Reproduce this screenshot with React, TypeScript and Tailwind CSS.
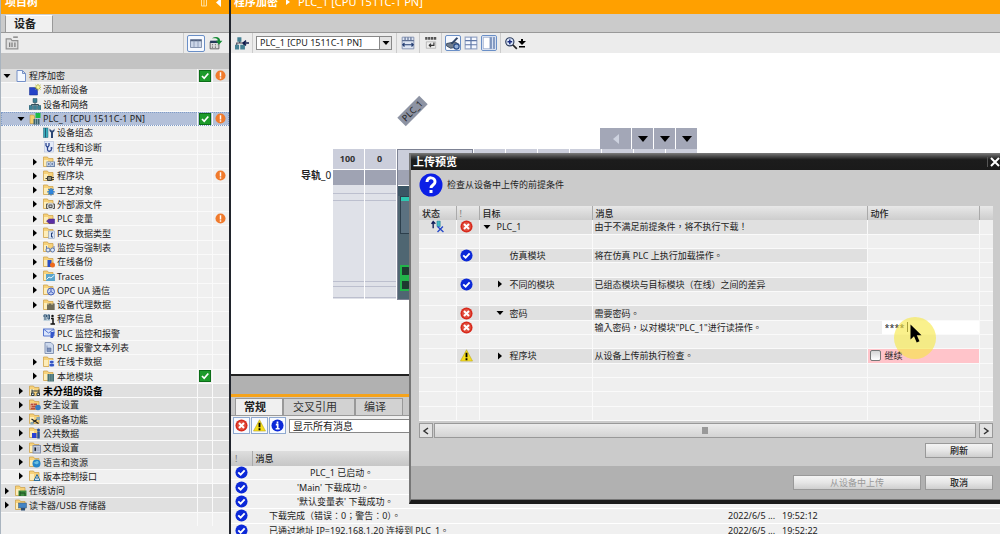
import type { ReactNode } from 'react';

interface TreeItem {
  label: string;
  level: 0 | 1 | 2;
  icon: string;
  arrow?: 'open' | 'closed';
  tone?: 'light' | 'dark' | 'selected';
  check?: boolean;
  alert?: boolean;
  bold?: boolean;
}

const treeItems: TreeItem[] = [
  { label: '程序加密', level: 0, icon: 'project', arrow: 'open', tone: 'dark', check: true, alert: true },
  { label: '添加新设备', level: 1, icon: 'add' },
  { label: '设备和网络', level: 1, icon: 'network' },
  { label: 'PLC_1 [CPU 1511C-1 PN]', level: 1, icon: 'plc', arrow: 'open', tone: 'selected', check: true, alert: true },
  { label: '设备组态', level: 2, icon: 'config' },
  { label: '在线和诊断', level: 2, icon: 'diagnose' },
  { label: '软件单元', level: 2, icon: 'units', arrow: 'closed' },
  { label: '程序块', level: 2, icon: 'blocks', arrow: 'closed', alert: true },
  { label: '工艺对象', level: 2, icon: 'gear', arrow: 'closed' },
  { label: '外部源文件', level: 2, icon: 'source', arrow: 'closed' },
  { label: 'PLC 变量', level: 2, icon: 'tag', arrow: 'closed', alert: true },
  { label: 'PLC 数据类型', level: 2, icon: 'types', arrow: 'closed' },
  { label: '监控与强制表', level: 2, icon: 'watch', arrow: 'closed' },
  { label: '在线备份', level: 2, icon: 'backup', arrow: 'closed' },
  { label: 'Traces', level: 2, icon: 'traces', arrow: 'closed' },
  { label: 'OPC UA 通信', level: 2, icon: 'opc', arrow: 'closed' },
  { label: '设备代理数据', level: 2, icon: 'proxy', arrow: 'closed' },
  { label: '程序信息', level: 2, icon: 'info' },
  { label: 'PLC 监控和报警', level: 2, icon: 'alarm' },
  { label: 'PLC 报警文本列表', level: 2, icon: 'textlist' },
  { label: '在线卡数据', level: 2, icon: 'card', arrow: 'closed' },
  { label: '本地模块', level: 2, icon: 'modules', arrow: 'closed', check: true },
  { label: '未分组的设备', level: 1, icon: 'ungrouped', arrow: 'closed', tone: 'dark', bold: true },
  { label: '安全设置', level: 1, icon: 'security', arrow: 'closed', tone: 'dark' },
  { label: '跨设备功能', level: 1, icon: 'cross', arrow: 'closed', tone: 'dark' },
  { label: '公共数据', level: 1, icon: 'common', arrow: 'closed', tone: 'dark' },
  { label: '文档设置', level: 1, icon: 'docs', arrow: 'closed', tone: 'dark' },
  { label: '语言和资源', level: 1, icon: 'globe', arrow: 'closed', tone: 'dark' },
  { label: '版本控制接口', level: 1, icon: 'version', arrow: 'closed' },
  { label: '在线访问', level: 0, icon: 'access', arrow: 'closed', tone: 'dark' },
  { label: '读卡器/USB 存储器', level: 0, icon: 'reader', arrow: 'closed', tone: 'dark' },
];

const indents = ['pl-0', 'pl-3.5', 'pl-7'];

const tones = {
  light: 'bg-[#f0f0f0]',
  dark: 'bg-[#e0e0e0]',
  selected: 'bg-[#b3c0d9] outline-1 -outline-offset-1 outline-dotted outline-[#7f9cc8]',
};

// overlays drawn on the lower right of the yellow folder
const folderBadges: Record<string, ReactNode> = {
  units: <><rect x="7" y="11" width="17" height="11" fill="#6f86ad" /><path d="M9 13h5v6H9zM16 13h5v6h-5z" fill="none" stroke="#dce6f5" strokeWidth="1.5" /></>,
  blocks: <path d="M5 17h4m0-4h8v8H9zm8 2h5m-5 4h5" fill="#8a8a7a" stroke="#3d3d35" strokeWidth="2" />,
  gear: <><path d="M16 8v15M8.500 15.500h15M11 10l10 11M21 10L11 21" stroke="#1f6fc4" strokeWidth="2.500" /><circle cx="16" cy="15.500" r="4.500" fill="#2f85dc" /></>,
  source: <><circle cx="15" cy="16" r="7" fill="#c9cdd0" /><path d="M10 12H7v9h3m10-9h3v9h-3M12 14h6v5h-6z" fill="none" stroke="#555" strokeWidth="2" /></>,
  tag: <path d="M7 16l5-4h11v9H12z" fill="#5a2ea6" stroke="#391a7a" />,
  types: <><rect x="11" y="8" width="12" height="15" fill="#d7e3f3" stroke="#7f94b5" /><path d="M20 12h-3v8h3" fill="none" stroke="#223f7a" strokeWidth="2" /></>,
  watch: <><path d="M7 10v6M22 10v6" stroke="#667fb0" strokeWidth="2" /><circle cx="10" cy="18" r="4" fill="#dfe9f7" stroke="#5b76ab" strokeWidth="2" /><circle cx="19" cy="18" r="4" fill="#dfe9f7" stroke="#5b76ab" strokeWidth="2" /></>,
  backup: <><rect x="9" y="8" width="8" height="14" fill="#2b4fc4" /><circle cx="19" cy="18" r="5" fill="#ef6a1c" /></>,
  traces: <><rect x="6" y="8" width="18" height="14" fill="#5aa5cc" /><path d="M7 19l5-5 4 2 7-6" fill="none" stroke="#eaf6fb" strokeWidth="2" /></>,
  opc: <><circle cx="16" cy="15" r="7" fill="#c8d4f4" stroke="#4360bd" strokeWidth="2" /><path d="M16 9v6l5 4m-5-4l-5 4" stroke="#4360bd" strokeWidth="2" fill="none" /></>,
  proxy: <><path d="M8 9h14v13H8z" fill="#9d9878" /><path d="M10 22V12m4 10V9m4 13V12m4 10V9" stroke="#403f36" strokeWidth="2" /></>,
  card: <><rect x="12" y="8" width="11" height="14" fill="#dbe7f8" /><ellipse cx="17.500" cy="12" rx="4" ry="2.500" fill="#3454c4" /><ellipse cx="17.500" cy="18" rx="5" ry="3" fill="#3454c4" /></>,
  modules: <><path d="M9 8h13v15H9z" fill="#436f74" /><path d="M13.500 8v15M18 8v15" stroke="#a8c3c2" /></>,
  ungrouped: <path d="M6 9v9m14-9v9M5 16h5v5H5zM16 16h5v5h-5zM6 12h14" fill="#e2edf2" stroke="#2c3940" strokeWidth="2" />,
  security: <><path d="M3 9h13v12H3z" fill="#b64d39" /><path d="M3 13h13M3 17h13M9 9v4m-4 0v4m8 0v4" stroke="#f0c4a4" /><circle cx="18" cy="17" r="5.500" fill="#327dc4" /></>,
  cross: <><path d="M5 12l14 9M5 21L20 10" stroke="#222" strokeWidth="2.500" /><path d="M15 8h7v6h-7zM3 18h6v5H3z" fill="#85a5b5" /></>,
  common: <><path d="M6 12h9v10H6z" fill="#2941d4" /><path d="M19 9v14" stroke="#244f9d" strokeWidth="5" /><circle cx="19" cy="6" r="3" fill="#244f9d" /></>,
  docs: <><rect x="8" y="7" width="15" height="15" fill="#c7cfdf" stroke="#8591ab" strokeWidth="2" /><path d="M11 11h3v7h-3zM16 12h5m-5 4h5" stroke="#65728d" /></>,
  globe: <><circle cx="15" cy="15" r="8" fill="#2686c9" /><path d="M9 13c4 0 5-4 8-3s3 5 0 6-5 0-8-3z" fill="#6cc1df" /></>,
  version: <path d="M16 9l6 12H10zM16 14v4" fill="#cfe4f3" stroke="#2d6e9c" strokeWidth="2" />,
  access: <><rect x="7" y="11" width="16" height="11" fill="#3d8b3f" /><path d="M10 22V13m0 3h10v6" stroke="#1c4e22" strokeWidth="2" fill="none" /></>,
  reader: <><rect x="7" y="8" width="16" height="10" fill="#4384c5" stroke="#42566c" /><path d="M12 18h8v5h-8z" fill="#2d4e75" /></>,
};

const plainIcons: Record<string, ReactNode> = {
  project: <path d="M4 1h11l6 6v16H4zM15 1v6h6" fill="#f4f8ff" stroke="#7590c8" strokeWidth="2" />,
  add: <><path d="M1 7h16v15H1z" fill="#2443c8" stroke="#102a8c" /><path d="M18 0v13M11.500 6.500h13M13 2l10 9M23 2l-10 9" stroke="#b5b52a" strokeWidth="2" /><circle cx="18" cy="6.500" r="3" fill="#faf7a0" /></>,
  network: <><path d="M12 7v5M5 17v-4h14v4" fill="none" stroke="#35505c" strokeWidth="2" /><path d="M8 1h8v8H8zM0 15h7v8H0zM8.500 15h7v8h-7zM17 15h7v8h-7z" fill="#3b8195" stroke="#284e61" /></>,
  plc: <><path d="M2 4h7l2 2v15H2z" fill="#f3cf71" stroke="#b98b2f" /><path d="M9 12h12v11H9z" fill="#3f6470" /><path d="M13 12v11m4-11v11" stroke="#c2d9dc" /><rect x="13" y="0" width="10" height="10" fill="#1cba48" /></>,
  config: <><rect x="1" y="2" width="9" height="19" fill="#39aebd" stroke="#1f6077" /><path d="M5 2v19" stroke="#245a72" strokeWidth="2" /><path d="M13 3v5l3 3v11h4V11l3-3V3l-3 4h-3z" fill="#2b4674" /></>,
  diagnose: <><rect x="3" y="1" width="18" height="21" fill="#e3eaf8" stroke="#a9b8d8" /><path d="M6 4v5l3 4 3-4V4M9 13v5c2 4 8 3 8-2" fill="none" stroke="#27418d" strokeWidth="2.500" /><circle cx="17" cy="14" r="2" fill="#27418d" /></>,
  info: <><path d="M1 2h13v14H1z" fill="#c3d4df" /><path d="M2 4h5v4H2zm8 0h3v8h-3zM2 12h5" stroke="#375774" strokeWidth="2" fill="none" /><path d="M16 11h4v10m-5 1h9" stroke="#111" strokeWidth="3" fill="none" /><circle cx="19" cy="6" r="2.500" fill="#111" /></>,
  alarm: <><path d="M1 4h21v14H1z" fill="#d9e5fc" stroke="#5474ce" strokeWidth="2" /><path d="M1 4l10 8L22 4" fill="none" stroke="#5474ce" strokeWidth="2" /><path d="M15 10h8l-3 12h-5z" fill="#3456ca" /></>,
  textlist: <><path d="M4 1h12l5 5v17H4z" fill="#cdd9ed" stroke="#8595b5" strokeWidth="2" /><path d="M8 7v12h8v-7H8" fill="#7f93bc" stroke="#4d628e" /></>,
};

function TreeIcon({ name }: { name: string }) {
  return (
    <svg viewBox="0 0 24 24" className="size-3 shrink-0" aria-hidden="true">
      {plainIcons[name] ?? (
        <>
          <path d="M1 2h8l2 3h9v16H1z" fill="#f7d27a" stroke="#cda04a" strokeWidth="1.500" />
          <path d="M2 8h8v12H2z" fill="#fdedb9" />
          {folderBadges[name]}
        </>
      )}
    </svg>
  );
}

function Arrow({ dir }: { dir?: 'open' | 'closed' }) {
  return (
    <svg viewBox="0 0 12 12" className="size-3 shrink-0" aria-hidden="true">
      {dir === 'open' && <path d="M2.500 4h7L6 8z" />}
      {dir === 'closed' && <path d="M4 2.500v7L8 6z" />}
    </svg>
  );
}

function CheckBox() {
  return (
    <svg viewBox="0 0 12 12" className="h-3 w-3" role="img" aria-label="OK">
      <rect x="0.500" y="0.500" width="11" height="11" fill="#1d9a2b" stroke="#0c6d18" />
      <path d="M3 6l2.200 2.300L9.300 3.500" fill="none" stroke="#fff" strokeWidth="1.700" />
    </svg>
  );
}

function AlertDot() {
  return (
    <svg viewBox="0 0 12 12" className="size-[11px]" role="img" aria-label="alert">
      <circle cx="6" cy="6" r="5.500" fill="#f07a2c" />
      <path d="M6 2.500v4.500M6 8v1.600" stroke="#fff" strokeWidth="1.600" />
    </svg>
  );
}

function StateIcon({ type }: { type: 'error' | 'ok' | 'warning' | 'info' }) {
  return (
    <svg viewBox="0 0 14 14" className="inline-block size-[13px] align-top" role="img" aria-label={type}>
      {type === 'error' && (
        <>
          <circle cx="7" cy="7" r="6.500" fill="#d8291c" />
          <circle cx="7" cy="7" r="4.800" fill="#e0503f" />
          <path d="M4.300 4.300l5.400 5.400M9.700 4.300L4.300 9.700" stroke="#fff" strokeWidth="2.200" />
        </>
      )}
      {type === 'ok' && (
        <>
          <circle cx="7" cy="7" r="6.500" fill="#0b28d8" />
          <path d="M3.500 6.800l2.600 2.600 4.300-4.600" fill="none" stroke="#fff" strokeWidth="2" />
        </>
      )}
      {type === 'warning' && (
        <>
          <path d="M7 .8L13.500 13H.500z" fill="#f7df1c" stroke="#b7a21a" strokeWidth="0.600" />
          <path d="M7 4v5M7 10v2" stroke="#000" strokeWidth="2" />
        </>
      )}
      {type === 'info' && (
        <>
          <circle cx="7" cy="7" r="6.500" fill="#0b28d8" />
          <path d="M5.200 6h2v4.500M5 10.500h4.300M7 2.800v2" fill="none" stroke="#fff" strokeWidth="1.800" />
        </>
      )}
    </svg>
  );
}

function ProjectTree() {
  return (
    <aside className="flex w-[229px] shrink-0 flex-col border-l border-[#a9b4bf] bg-[#f0f0f0]">
      <header className="flex h-3.5 shrink-0 items-start justify-between overflow-hidden bg-[#ffa000] pr-1.5 pl-1 text-[11px] leading-none font-bold text-white">
        <h2 className="-mt-1">项目树</h2>
        <svg viewBox="0 0 24 14" className="h-3.5 w-6" aria-hidden="true">
          <path d="M2.500 -2v8h5v-8M5 -2v8" fill="none" stroke="#ffe0a0" />
          <path d="M22-2v9l-5-4.500z" fill="#fff" />
        </svg>
      </header>
      <div className="flex h-[19px] shrink-0 items-end border-b border-[#999] bg-[#cbcbcb] pl-1">
        <button className="h-[17px] w-12 border border-b-0 border-[#999] border-t-white bg-[#f0f0f0] pr-2 text-[11px] leading-4 font-bold">设备</button>
      </div>
      <div className="flex h-5 shrink-0 items-center bg-[#ececec] pr-1.5 pl-1">
        <button aria-label="新建组" className="mr-auto">
          <svg viewBox="0 0 24 24" className="size-3.5">
            <path d="M2 5h8l2 3h10v14H2z" fill="#ddd" stroke="#909090" strokeWidth="2" />
            <path d="M8 11v8m4-8v8m5-8v8M14 2h8" stroke="#777" strokeWidth="2" />
          </svg>
        </button>
        <span className="h-full w-1 border-l border-[#ccc]" />
        <button aria-label="详细视图" className="rounded-xs border border-[#6a8fc7] bg-[#f6f9ff] px-0.5">
          <svg viewBox="0 0 24 24" className="h-[15px] w-3">
            <path d="M1 4h22v16H1z" fill="#ccd6e8" stroke="#667899" strokeWidth="1.500" />
            <path d="M1 6h22" stroke="#53627e" strokeWidth="3" />
            <path d="M8 6v14m8-14v14" stroke="#8190ac" strokeWidth="1.500" />
          </svg>
        </button>
        <button aria-label="转到" className="ml-1">
          <svg viewBox="0 0 24 24" className="size-3.5">
            <path d="M2 10h15v12H2z" fill="#ddd" stroke="#555" strokeWidth="1.500" />
            <path d="M2 10h15" stroke="#24395a" strokeWidth="4" />
            <path d="M5 15h2m3 0h2m3 0h1M5 19h2m3 0h2" stroke="#666" strokeWidth="2" />
            <path d="M5 4c7-4 14-2 14 4h4l-6 7-5-7h3c0-4-4-4-10-4z" fill="#168a35" />
          </svg>
        </button>
      </div>
      <div className="h-4 shrink-0 bg-[#c3c3c3]" />
      <ul className="flex min-h-0 flex-1 flex-col pb-2">
        {treeItems.map((item) => (
          <li key={item.label} className={`flex min-h-0 flex-1 items-stretch border-b border-[#fafafa] leading-none ${tones[item.tone ?? 'light']}`}>
            <div className={`flex min-w-0 flex-1 items-center gap-0.5 ${indents[item.level]}`}>
              <Arrow dir={item.arrow} />
              <TreeIcon name={item.icon} />
              <span className={`whitespace-nowrap ${item.bold ? 'text-[10px] font-bold text-black' : 'text-[9px]'}`}>{item.label}</span>
            </div>
            <span className="flex w-[15px] items-center justify-center border-l border-[#fafafa]">{item.check && <CheckBox />}</span>
            <span className="flex w-[17px] items-center border-l border-[#fafafa] pl-0.5">{item.alert && <AlertDot />}</span>
          </li>
        ))}
        <li className="flex flex-1">
          <span className="ml-auto w-[15px] border-l border-[#fafafa]" />
          <span className="w-[17px] border-l border-[#fafafa]" />
        </li>
      </ul>
    </aside>
  );
}

function Toolbar() {
  return (
    <div className="flex h-5 shrink-0 items-center bg-[#ececec] pl-1">
      <button aria-label="网络视图">
        <svg viewBox="0 0 24 24" className="size-3.5">
          <path d="M8 4v8M3 17v-5h12v5" stroke="#445" strokeWidth="2" fill="none" />
          <path d="M4 2h7v8H4zM0 15h7v8H0zM9 15h8v8H9z" fill="#448093" />
          <path d="M24 12h-9m4-4l-5 4 5 4" stroke="#111c4c" strokeWidth="2.500" fill="none" />
        </svg>
      </button>
      <span className="mx-[3px] h-full border-l border-[#ccc]" />
      <div className="relative">
        <select aria-label="设备" className="block h-3.5 w-[136px] appearance-none border border-[#888] bg-white px-[3px] text-[9px] leading-3">
          <option>PLC_1 [CPU 1511C-1 PN]</option>
        </select>
        <span className="pointer-events-none absolute top-0 right-0 flex h-3.5 w-[13px] items-center justify-center border border-[#888] bg-[#e3e3e3]">
          <Arrow dir="open" />
        </span>
      </div>
      <span className="mx-1 h-full border-l border-[#ccc]" />
      <button aria-label="显示宽度">
        <svg viewBox="0 0 24 24" className="size-3.5">
          <path d="M2 2h20v20H2z" fill="#dde5f3" stroke="#7d8cab" strokeWidth="1.500" />
          <path d="M2 8h20M7 2v6m5-6v6m5-6v6" stroke="#5d6f94" strokeWidth="2" />
          <path d="M3 15h18M6 12l-3 3 3 3m12-6l3 3-3 3" stroke="#233d72" strokeWidth="2" fill="none" />
        </svg>
      </button>
      <span className="mx-1 h-full border-l border-[#ccc]" />
      <button aria-label="显示标签">
        <svg viewBox="0 0 24 24" className="size-3.5">
          <path d="M2 4h20" stroke="#555" strokeWidth="5" strokeDasharray="4 1" />
          <path d="M4 10h16v11H4z" fill="#eee" stroke="#999" />
          <path d="M17 11v5H9m3-3l-3 3 3 3" fill="none" stroke="#333" strokeWidth="2" />
        </svg>
      </button>
      <span className="mx-[3px] h-full border-l border-[#ccc]" />
      <button aria-label="编辑" className="rounded-xs border border-[#6a8fc7] bg-[#f6f9ff]">
        <svg viewBox="0 0 24 24" className="size-3.5">
          <path d="M1 13l14-3 7 4v4l-14 3-7-4z" fill="#6f7c8c" stroke="#38465c" strokeWidth="1.500" />
          <path d="M8 13L18 2l3 2L11 14z" fill="#2f4568" />
          <circle cx="18" cy="18" r="4.500" fill="#96b1d8" stroke="#274b88" strokeWidth="2" />
        </svg>
      </button>
      <button aria-label="网格" className="mx-[3px]">
        <svg viewBox="0 0 24 24" className="size-3.5">
          <path d="M2 2h20v20H2z" fill="#f4f7ff" stroke="#97a6c6" strokeWidth="2" />
          <path d="M2 8h20M2 15h20M12 2v20" stroke="#5d75a5" strokeWidth="2" />
        </svg>
      </button>
      <button aria-label="分栏" className="rounded-xs border border-[#6a8fc7] bg-[#f6f9ff]">
        <svg viewBox="0 0 24 24" className="size-3.5">
          <path d="M2 2h20v20H2z" fill="#fff" stroke="#8b9fc6" strokeWidth="1.500" />
          <path d="M13 2h9v20h-9z" fill="#7d94bd" />
          <path d="M18 2v20" stroke="#d6e0f2" strokeWidth="2" />
        </svg>
      </button>
      <span className="mx-[3px] h-full border-l border-[#ccc]" />
      <button aria-label="缩放" className="flex items-center">
        <svg viewBox="0 0 24 24" className="size-3.5">
          <circle cx="10" cy="10" r="7" fill="#dce8fb" stroke="#2c3b5c" strokeWidth="2" />
          <path d="M10 6v8M6 10h8" stroke="#1a2b7c" strokeWidth="2.500" />
          <path d="M15 15l7 7" stroke="#222" strokeWidth="3" />
        </svg>
        <svg viewBox="0 0 8 12" className="h-3 w-2">
          <path d="M3 2h2v2h3L4 8 0 4h3zM1 9h6v1.500H1z" />
        </svg>
      </button>
    </div>
  );
}

function RailSlot({ label }: { label?: string }) {
  return (
    <div className="h-[150px] w-[31px] shrink-0 bg-[#dfe1e8]">
      <div className="flex h-[21px] items-center justify-center border-b border-white bg-[#cbcedb] pr-0.5 text-[9px] font-bold text-[#333]">{label}</div>
      <div className="h-[15px] bg-[#9fa3b3]" />
      <div className="mt-2 h-2 border-y border-[#bcbfce]" />
      <div className="mt-20 h-1.5 border-y border-[#bcbfce]" />
      <div className="mt-2.5 border-t border-[#bcbfce]" />
    </div>
  );
}

function DeviceView() {
  return (
    <section className="relative min-h-0 flex-1 overflow-hidden bg-white">
      <span className="absolute top-[52px] left-[166px] flex h-3 w-[31px] -rotate-45 items-center justify-center bg-[#8d93a3] text-[9px]">PLC_1</span>
      <div className="flex gap-px pt-[75px] pl-[369px]">
        <button aria-label="向左" className="flex h-[21px] w-[31px] items-center justify-center bg-[#a3a7b7]">
          <svg viewBox="0 0 8 12" className="h-3 w-2"><path d="M7 1v10L1 6z" fill="#cdd2df" /></svg>
        </button>
        {[1, 2, 3].map((n) => (
          <button key={n} aria-label={`展开 ${n}`} className="flex h-[21px] w-[21px] items-center justify-center bg-[#a3a7b7]">
            <svg viewBox="0 0 12 8" className="h-2 w-3"><path d="M1 1h10L6 7z" /></svg>
          </button>
        ))}
      </div>
      <div className="flex gap-px pl-[70px]">
        <span className="mr-px w-[30px] pt-5 text-[10px] leading-3 font-bold whitespace-nowrap">导轨<span className="font-normal">_0</span></span>
        <RailSlot label="100" />
        <RailSlot label="0" />
        <div className="flex h-[151px] w-[76px] shrink-0 flex-col border border-[#7d8294] bg-[#4f6672]">
          <div className="h-5 shrink-0 bg-[#cbcedb]" />
          <div className="h-4 shrink-0 border-b border-white bg-[#9fa3b3]" />
          <div className="h-2.5 shrink-0 bg-[#3b5564]" />
          <div className="mx-0.5 h-[38px] shrink-0 border border-[#2c3f4c] bg-[#5b7180]"><span className="block h-1 w-2 bg-[#2ec7b0]" /></div>
          <div className="flex-1" />
          <div className="mb-2 ml-0.5 flex h-[26px] shrink-0 flex-col justify-between bg-[#22b34a] p-0.5">
            <span className="h-2 w-2 rounded-r-xs bg-[#1d3b30]" />
            <span className="h-2 w-2 rounded-r-xs bg-[#1d3b30]" />
          </div>
        </div>
        {[1, 2, 3, 4, 5, 6, 7].map((n) => <RailSlot key={n} />)}
      </div>
    </section>
  );
}

const messages = [
  { text: 'PLC_1 已启动。', indent: 'pl-[58px]' },
  { text: "'Main' 下载成功。", indent: 'pl-[45px]' },
  { text: "'默认变量表' 下载成功。", indent: 'pl-[45px]' },
  { text: '下载完成（错误：0；警告：0）。', indent: 'pl-[17px]', date: '2022/6/5 ...', time: '19:52:12' },
  { text: '已通过地址 IP=192.168.1.20 连接到 PLC_1。', indent: 'pl-[17px]', date: '2022/6/5 ...', time: '19:52:22' },
];

function MessagePanel() {
  return (
    <section className="h-40 shrink-0 overflow-hidden border-t-2 border-[#222] bg-[#f0f0f0]">
      <div className="h-[18px] bg-[#b1b1b1]" />
      <div className="h-[3px] bg-[#f5a31c]" />
      <nav className="flex h-[19px] items-end border-b border-[#999] bg-[#c8c8c8] pl-1 text-[11px] leading-4">
        <button className="h-[17px] w-12 border border-b-0 border-[#999] bg-[#f0f0f0] pr-2 font-bold">常规</button>
        <button className="h-[17px] w-[72px] border border-b-0 border-[#999] bg-[#d2d2d2] pr-2 text-[#333]">交叉引用</button>
        <button className="h-[17px] w-12 border border-b-0 border-[#999] bg-[#d2d2d2] pr-2 text-[#333]">编译</button>
      </nav>
      <div className="flex h-[19px] items-center gap-px pl-0.5">
        <button aria-label="错误" className="flex size-[17px] items-center justify-center border border-[#8fa9d0] bg-[#f7faff]"><StateIcon type="error" /></button>
        <button aria-label="警告" className="flex size-[17px] items-center justify-center border border-[#8fa9d0] bg-[#f7faff]"><StateIcon type="warning" /></button>
        <button aria-label="信息" className="flex size-[17px] items-center justify-center border border-[#8fa9d0] bg-[#f7faff]"><StateIcon type="info" /></button>
        <select aria-label="筛选" className="ml-0.5 h-3.5 w-[200px] appearance-none border border-[#888] bg-white px-[3px] text-[10px] leading-3">
          <option>显示所有消息</option>
        </select>
      </div>
      <table className="mt-4 h-[87px] w-full table-fixed border-collapse text-left text-[9px] leading-none whitespace-nowrap">
        <colgroup>
          <col className="w-[21px]" />
          <col className="w-[476px]" />
          <col className="w-[54px]" />
          <col />
        </colgroup>
        <thead className="bg-linear-to-b from-[#dedede] to-[#c6c6c6]">
          <tr className="h-[15px]">
            <th className="pl-1 font-normal text-[#777]">!</th>
            <th className="border-l border-[#aaa] pl-[3px] font-medium">消息</th>
            <th aria-label="日期" />
            <th aria-label="时间" />
          </tr>
        </thead>
        <tbody>
          {messages.map((m) => (
            <tr key={m.text} className="border-b border-white">
              <td className="p-0 pl-1"><StateIcon type="ok" /></td>
              <td className={`py-0 ${m.indent}`}>{m.text}</td>
              <td className="p-0">{m.date}</td>
              <td className="p-0">{m.time}</td>
            </tr>
          ))}
        </tbody>
      </table>
    </section>
  );
}

interface CheckRow {
  state?: 'error' | 'ok' | 'warning';
  arrow?: 'open' | 'closed';
  target?: string;
  indent?: string;
  message?: string;
  shaded?: boolean;
  action?: 'shaded' | 'password' | 'confirm';
}

const checkRows: CheckRow[] = [
  { state: 'error', arrow: 'open', target: 'PLC_1', indent: 'pl-px', message: '由于不满足前提条件，将不执行下载！', shaded: true, action: 'shaded' },
  {},
  { state: 'ok', target: '仿真模块', indent: 'pl-3.5', message: '将在仿真 PLC 上执行加载操作。', shaded: true },
  {},
  { state: 'ok', arrow: 'closed', target: '不同的模块', indent: 'pl-3.5', message: '已组态模块与目标模块（在线）之间的差异', shaded: true },
  {},
  { state: 'error', arrow: 'open', target: '密码', indent: 'pl-3.5', message: '需要密码。', shaded: true },
  { state: 'error', message: '输入密码，以对模块"PLC_1"进行读操作。', action: 'password' },
  {},
  { state: 'warning', arrow: 'closed', target: '程序块', indent: 'pl-3.5', message: '从设备上传前执行检查。', shaded: true, action: 'confirm' },
  {},
  {},
  {},
  {},
];

function ActionCell({ row }: { row: CheckRow }) {
  if (row.action === 'password') {
    return (
      <td className="border-l border-[#fafafa] p-0 pl-3.5">
        <div className="relative">
          <input aria-label="密码" type="text" defaultValue="****" className="block h-[13px] w-full bg-white px-[3px] text-[9px] leading-3 outline-none" />
          <span className="absolute top-px left-[25px] h-2.5 w-px bg-[#333]" />
        </div>
      </td>
    );
  }
  if (row.action === 'confirm') {
    return (
      <td className="border-l border-[#fafafa] bg-[#ffc4ca] p-0 pl-0.5">
        <label className="flex items-center gap-1">
          <input type="checkbox" className="size-[11px] appearance-none rounded-xs border border-[#777] bg-linear-to-b from-[#d5d5d5] to-white" />
          继续
        </label>
      </td>
    );
  }
  return <td className={`border-l border-[#fafafa] p-0 ${row.action === 'shaded' ? 'bg-[#e0e0e0]' : ''}`} />;
}

function UploadDialog() {
  const headCell = 'border-l border-[#aaa] py-0 pr-0 pl-[3px] font-medium first:border-l-0';
  const button = 'h-[15px] border border-[#999] bg-linear-to-b from-[#f4f4f4] via-[#e6e6e6] to-[#cfcfcf] text-[9px] leading-none';

  return (
    <div role="dialog" aria-label="上传预览" className="absolute top-[153px] right-0 left-[409px] border-b-4 border-l-2 border-b-[#1a1a1a] border-l-[#777] bg-[#cbcbcb] text-[9px]">
      <header className="flex h-[17px] items-center justify-between bg-linear-to-b from-[#7c7c7c] via-[#1c1c1c] via-40% to-[#1a1a1a] pl-0.5 text-white">
        <h2 className="text-[11px] leading-none font-bold">上传预览</h2>
        <button aria-label="关闭" className="border-l border-[#555] pl-0.5">
          <svg viewBox="0 0 10 10" className="size-2.5"><path d="M1 1l8 8M9 1L1 9" stroke="#fff" strokeWidth="2" /></svg>
        </button>
      </header>
      <div className="px-2 pr-[7px]">
        <div className="flex h-9 items-center gap-1 pb-1.5">
          <svg viewBox="0 0 24 24" className="size-6" role="img" aria-label="提示">
            <circle cx="12" cy="12" r="11.500" fill="#0b1fe6" />
            <path d="M8 9c0-6 8.500-5 8 0 0 3-4 3-4 6" fill="none" stroke="#fff" strokeWidth="3" />
            <rect x="10.500" y="17" width="3" height="3" fill="#fff" />
          </svg>
          <p>检查从设备中上传的前提条件</p>
        </div>
        <table className="h-[215px] w-full table-fixed border-collapse bg-[#efefef] text-left leading-none whitespace-nowrap">
          <colgroup>
            <col className="w-[37px]" />
            <col className="w-[23px]" />
            <col className="w-[113px]" />
            <col />
            <col className="w-28" />
            <col className="w-3.5" />
          </colgroup>
          <thead className="bg-linear-to-b from-[#e8e8e8] to-[#cdcdcd]">
            <tr className="h-3.5">
              <th className={headCell}>状态</th>
              <th className={headCell}><span className="font-normal text-[#777]">!</span></th>
              <th className={headCell}>目标</th>
              <th className={headCell}>消息</th>
              <th className={headCell}>动作</th>
              <th className={headCell} aria-label="更多" />
            </tr>
          </thead>
          <tbody>
            {checkRows.map((row, i) => {
              const cell = `border-l border-[#fafafa] py-0 pr-0 ${row.shaded ? 'bg-[#e0e0e0]' : ''}`;
              return (
                <tr key={i} className="h-3.5 border-b border-[#fafafa]">
                  <td className={`p-0 pl-3 ${i === 0 ? 'bg-[#e0e0e0]' : ''}`}>
                    {i === 0 && (
                      <svg viewBox="0 0 24 24" className="size-[13px]" role="img" aria-label="上传">
                        <path d="M4 15V5M1 7l3-4 4 4" stroke="#111d58" strokeWidth="2.500" fill="none" />
                        <path d="M11 2h6v10h-6z" fill="#42bac6" stroke="#24778a" />
                        <path d="M12 12l11 10M22 12L12 22" stroke="#2547c8" strokeWidth="2.500" />
                      </svg>
                    )}
                  </td>
                  <td className={`${cell} pl-[3px]`}>{row.state && <StateIcon type={row.state} />}</td>
                  <td className={`${cell} ${row.indent ?? ''}`}>
                    {row.target && <span className="flex items-center gap-1"><Arrow dir={row.arrow} />{row.target}</span>}
                  </td>
                  <td className={`${cell} pl-0.5`}>{row.message}</td>
                  <ActionCell row={row} />
                  <td className="border-l border-[#fafafa] p-0" />
                </tr>
              );
            })}
          </tbody>
        </table>
        <div className="mt-0.5 flex h-[15px] gap-px">
          <button aria-label="向左滚动" className="flex w-3.5 items-center justify-center border border-[#999] bg-[#e2e2e2]">
            <svg viewBox="0 0 8 8" className="size-2"><path d="M6 1L2 4l4 3" fill="none" stroke="#333" strokeWidth="1.500" /></svg>
          </button>
          <div className="flex flex-1 items-center justify-center border border-[#999] bg-linear-to-b from-[#ececec] to-[#d3d3d3]">
            <span className="h-[7px] w-1.5 bg-[#999]" />
          </div>
          <button aria-label="向右滚动" className="ml-0.5 flex w-3.5 items-center justify-center border border-[#999] bg-[#e2e2e2]">
            <svg viewBox="0 0 8 8" className="size-2"><path d="M2 1l4 3-4 3" fill="none" stroke="#333" strokeWidth="1.500" /></svg>
          </button>
        </div>
        <div className="flex h-7 items-start justify-end pt-[5px]">
          <button className={`${button} w-[68px] font-medium`}>刷新</button>
        </div>
      </div>
      <footer className="flex h-[34px] items-center justify-end gap-1 border-b border-[#777] bg-[#b1b1b1] pr-[7px]">
        <button disabled className={`${button} w-32 text-[#999]`}>从设备中上传</button>
        <button className={`${button} w-[68px] font-medium`}>取消</button>
      </footer>
    </div>
  );
}

export default function App() {
  return (
    <div className="relative flex h-screen overflow-hidden bg-[#20242c] font-['Noto_Sans','Noto_Sans_CJK_TC',sans-serif] text-[#222]">
      <ProjectTree />
      <main className="ml-0.5 flex min-w-0 flex-1 flex-col">
        <header className="h-3.5 shrink-0 overflow-hidden bg-[#ffa000] pl-[3px] text-[11px] text-white">
          <h1 className="-mt-[5px] flex items-center gap-1 leading-3.5 font-normal">
            <span className="font-bold">程序加密</span>
            <svg viewBox="0 0 12 12" className="size-3" aria-hidden="true"><path d="M4 3v6l4-3z" fill="#fff" /></svg>
            PLC_1 [CPU 1511C-1 PN]
          </h1>
        </header>
        <div className="h-[19px] shrink-0 border-b border-[#999] bg-[#cbcbcb]" />
        <Toolbar />
        <DeviceView />
        <MessagePanel />
      </main>
      <UploadDialog />
      <div className="pointer-events-none absolute top-[317px] left-[894px] size-[42px] rounded-full bg-[#f7e740]/60" />
      <svg viewBox="0 0 12 20" className="pointer-events-none absolute top-[324px] left-[910px] h-5 w-3" aria-hidden="true">
        <path d="M.500.500v15l3.500-3.300 2.700 6.300 2.800-1.200-2.700-6h4.700z" />
      </svg>
    </div>
  );
}
